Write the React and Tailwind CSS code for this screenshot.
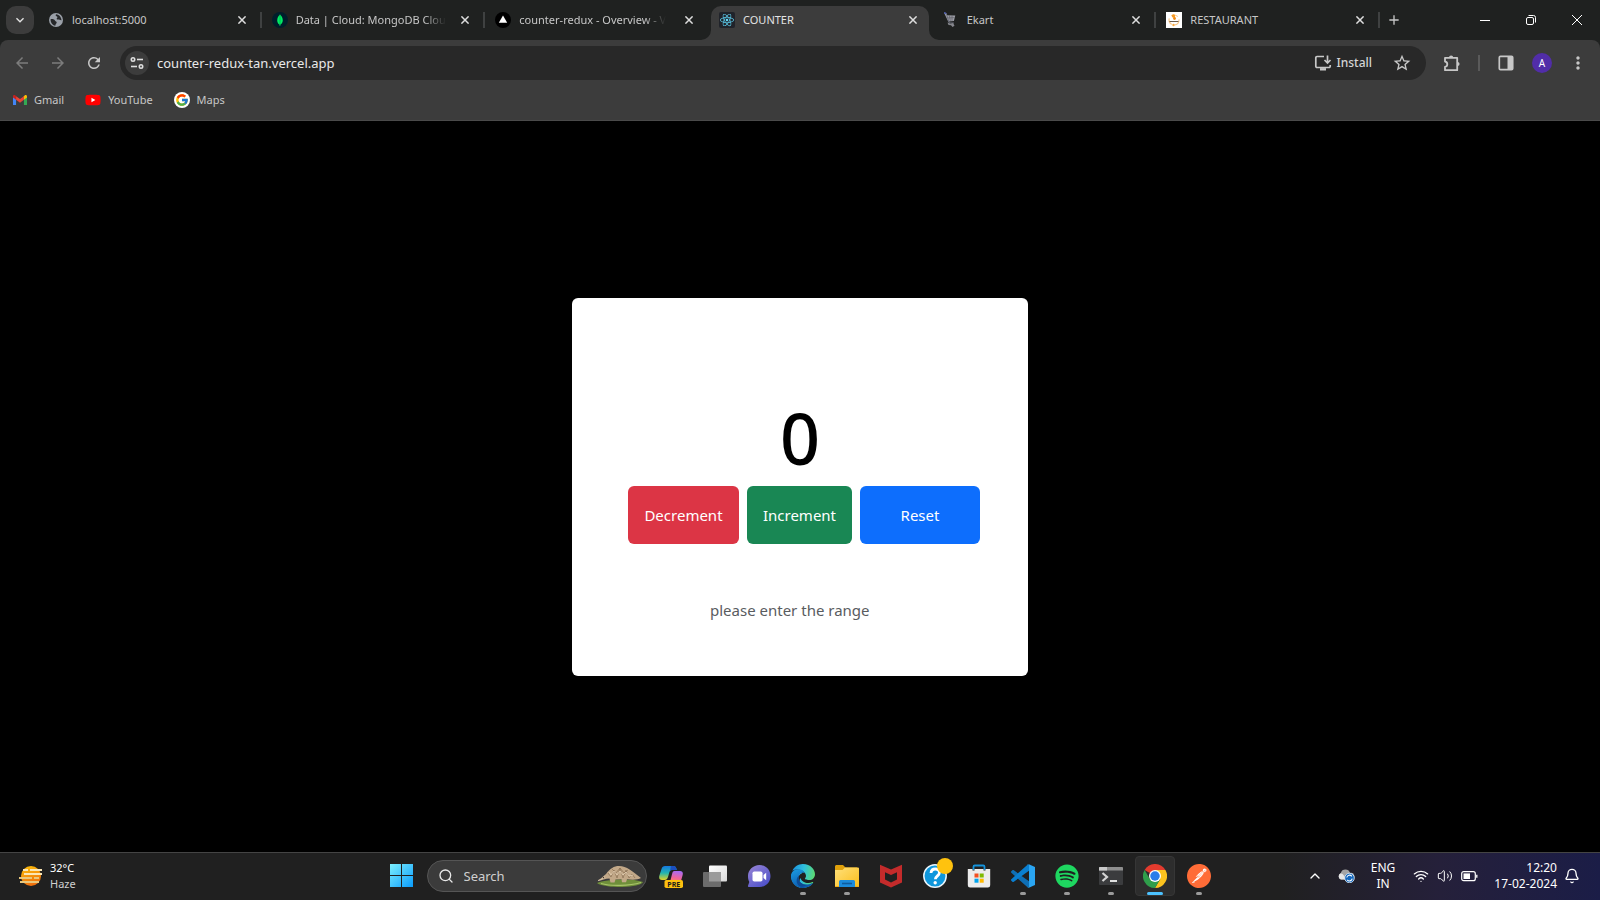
import React, { useState } from "react";
import {
  MdArrowBack,
  MdArrowForward,
  MdRefresh,
  MdAdd,
  MdStarBorder,
  MdMoreVert,
  MdKeyboardArrowDown,
} from "react-icons/md";
import { FaReact, FaYoutube, FaSpotify, FaEdge } from "react-icons/fa6";
import { SiPostman } from "react-icons/si";
import { FcGoogle } from "react-icons/fc";
import { Wifi, Volume2, Bell, ChevronUp, Search } from "lucide-react";

/* ---------- favicons ---------- */

const GlobeIcon = () => (
  <svg viewBox="0 0 16 16" className="size-4">
    <circle cx="8" cy="8" r="7" fill="#9aa0a8" />
    <path d="M2.600 7.200c2.200-.4 3.800.2 4.300 1.300.4 1 1.800.8 1.800 2 0 1-1.200 1.200-1.400 3.200-2.900-.6-4.900-3.200-4.700-6.500z" fill="#26282a" />
    <path d="M8.200 2.200c-.8.800-.6 1.600.3 2 .9.300 1.300 1 .5 1.700-.7.700-.3 1.600.9 1.700 1.500.1 2.400.8 3.600.6-.1-2.900-2.200-5.500-5.300-6z" fill="#26282a" />
  </svg>
);

const MongoIcon = () => (
  <svg viewBox="0 0 16 16" className="size-4">
    <circle cx="8" cy="8" r="8" fill="#001e2b" />
    <path d="M8 2.200c.4 1 2.800 2.600 2.800 6 0 2.300-1.200 3.600-2.400 4.400L8.200 14h-.5l-.2-1.400C6.200 11.700 5.200 10.400 5.200 8.200c0-3.400 2.400-5 2.800-6z" fill="#00ed64" />
    <path d="M8 3v9" stroke="#00a84a" strokeWidth=".7" />
  </svg>
);

const VercelIcon = () => (
  <svg viewBox="0 0 16 16" className="size-4">
    <circle cx="8" cy="8" r="8" fill="#000" />
    <path d="M8 3.500l4.200 7.300H3.800z" fill="#fff" />
  </svg>
);

const ReactIcon = () => (
  <span className="flex size-4 items-center justify-center rounded-xs bg-[#20232a]">
    <FaReact className="size-3.5 text-[#61dafb]" />
  </span>
);

const CartIcon = () => (
  <svg viewBox="0 0 16 16" className="size-4">
    <path d="M1 .8l2.200.5.8 2 8.300.2-1.400 5.400-5.700.6z" fill="#9a9ba3" />
    <path d="M1 .8l2.200.5L6.300 11h4.500" fill="none" stroke="#6f7280" strokeWidth="1" />
    <path d="M6.500 3.500l.8 5.500M9 3.500v5.400M4.500 6l7-.4" stroke="#55575f" strokeWidth=".6" />
    <path d="M4.500 10.500l3 1.300 2.600-.8 1.400 2.800-2 1.200-1.500-1.700-2.500-.4z" fill="#85868c" />
    <path d="M1 .8l2.200.5" stroke="#4157c9" strokeWidth="1" />
  </svg>
);

const RestaurantIcon = () => (
  <svg viewBox="0 0 16 16" className="size-4">
    <rect width="16" height="16" fill="#fff" />
    <circle cx="8" cy="8" r="5" fill="none" stroke="#fbc98a" strokeWidth="1.200" strokeDasharray="7 3" />
    <circle cx="7.500" cy="4" r="1.700" fill="#f59a23" />
    <circle cx="8.500" cy="6.500" r="1.400" fill="#f28a12" />
    <path d="M3.500 9.500h9" stroke="#6b5a48" strokeWidth="1" />
    <circle cx="7.500" cy="13" r="1.200" fill="#f8a73c" />
  </svg>
);

const GmailIcon = () => (
  <svg viewBox="0 0 16 12" className="w-3.5">
    <path d="M0 1.500V11a1 1 0 001 1h2.500V5.200L1.700 2z" fill="#4285f4" />
    <path d="M16 1.500V11a1 1 0 01-1 1h-2.500V5.200L14.300 2z" fill="#34a853" />
    <path d="M12.500 1.500v3.900L16 2.900V1.500c0-1.400-1.500-2-2.500-1.200z" fill="#fbbc04" />
    <path d="M3.500 5.400V1.300L8 4.700l4.500-3.400v4.100L8 8.800z" fill="#ea4335" />
    <path d="M0 1.500v1.400l3.500 2.500V1.300L2.500.4C1.500-.4 0 .2 0 1.500z" fill="#c5221f" />
  </svg>
);

/* ---------- browser toolbar icons ---------- */

const CloseIcon = () => (
  <svg viewBox="0 0 8 8" className="size-2" stroke="currentColor" strokeWidth="1.500">
    <path d="M.4.4l7.200 7.200M7.600.4L.4 7.600" />
  </svg>
);

const TuneIcon = () => (
  <svg viewBox="0 0 16 16" className="size-4" fill="none" stroke="#dedede" strokeWidth="1.600">
    <circle cx="4" cy="4.500" r="1.700" />
    <path d="M8 4.500h6" />
    <circle cx="12" cy="11.500" r="1.700" />
    <path d="M2 11.500h6" />
  </svg>
);

const InstallIcon = () => (
  <svg viewBox="0 0 18 18" className="size-[18px]" fill="none" stroke="#c7c7c7" strokeWidth="1.700">
    <path d="M10 2.500H3a1.200 1.200 0 00-1.200 1.200v8.600A1.200 1.200 0 003 13.500h12a1.200 1.200 0 001.200-1.200V11" />
    <path d="M13.500 1.500v7M10.500 6l3 3 3-3" />
    <path d="M6 15.300h6" strokeWidth="2.400" />
  </svg>
);

const PuzzleIcon = () => (
  <svg viewBox="0 0 18 18" className="size-[18px]">
    <path
      d="M2 3.800h12.200v12.400H2v-3.400c1.500-.2 2.300-1.200 2.300-2.600S3.500 7.800 2 7.500z"
      fill="none"
      stroke="#c7c7c7"
      strokeWidth="1.800"
      strokeLinejoin="round"
    />
    <path d="M6 3.500a2.100 2.100 0 014.200 0zM14.500 7.900a2.100 2.100 0 010 4.200z" fill="#c7c7c7" />
  </svg>
);

const PanelIcon = () => (
  <svg viewBox="0 0 16 16" className="size-4">
    <rect x="1.300" y="1.300" width="13.400" height="13.400" rx="1.200" fill="none" stroke="#c7c7c7" strokeWidth="1.700" />
    <path d="M9.500 1.500h5v13h-5z" fill="#c7c7c7" />
  </svg>
);

/* ---------- taskbar icons ---------- */

const HazeIcon = () => (
  <svg viewBox="0 0 24 22" className="w-6">
    <defs>
      <linearGradient id="haze" x1="0" y1="0" x2="0.300" y2="1">
        <stop offset="0" stopColor="#fdc20a" />
        <stop offset="1" stopColor="#f0700c" />
      </linearGradient>
    </defs>
    <circle cx="12" cy="11" r="10" fill="url(#haze)" />
    <path d="M4 5h5M11 5h12M5 9h18" stroke="#fbe6b5" strokeWidth="1.800" />
    <path d="M0 13h13M15 13h5M1 17h19" stroke="#e9c77d" strokeWidth="1.800" />
  </svg>
);

const StartIcon = () => (
  <svg viewBox="0 0 23 23" className="size-[23px]">
    <defs>
      <linearGradient id="win" gradientUnits="userSpaceOnUse" x1="0" y1="0" x2="23" y2="23">
        <stop offset="0" stopColor="#7df0ff" />
        <stop offset="1" stopColor="#0a9bfb" />
      </linearGradient>
    </defs>
    <path d="M0 0h11v11H0zM12 0h11v11H12zM0 12h11v11H0zM12 12h11v11H12z" fill="url(#win)" />
  </svg>
);

const Pangolin = () => (
  <svg viewBox="0 0 46 22" className="w-[46px]">
    <path d="M0 18c8-4 36-5 46-1-2 6-38 7-46 1z" fill="#6f8f3a" />
    <path d="M4 18.500c10 3 28 2.500 40-1" stroke="#a8c46a" strokeWidth="1.200" fill="none" />
    <path d="M1 15.500c3-1.600 5-4.500 8-6.500C13 3.500 17 1 22 1c8 0 13 5 22 12-3 2-9 1.800-14 1.300l-1 3h-4l-.5-3-6 .3-1 3h-4l-1-4.200C8 13.500 5 15.800 1 15.500z" fill="#c2a888" />
    <path d="M11 8l3 4 3-7 3 8 3-10 3 10 3-8 3 8 3-4 3 4M15 4l4 4 4-5 4 5 4-3" stroke="#8a7053" strokeWidth=".7" fill="none" />
    <path d="M12 7l2 3 3-4 3 4 3-4 3 4 3-3 3 4 4-1" stroke="#e6d2b6" strokeWidth=".8" fill="none" />
    <path d="M1 15.500c3-.5 5-2 7-4" stroke="#d8c4aa" strokeWidth="1" fill="none" />
    <circle cx="6.500" cy="12.600" r=".6" fill="#2c2219" />
  </svg>
);

const CopilotIcon = () => (
  <svg viewBox="0 0 24 24" className="size-6">
    <defs>
      <linearGradient id="cpA" x1="0" y1="0" x2="0" y2="1">
        <stop offset="0" stopColor="#1578e0" />
        <stop offset=".5" stopColor="#22b5b0" />
        <stop offset="1" stopColor="#e3d324" />
      </linearGradient>
      <linearGradient id="cpB" x1="0.500" y1="0" x2="0.300" y2="1">
        <stop offset="0" stopColor="#a76bf5" />
        <stop offset=".6" stopColor="#f0649a" />
        <stop offset="1" stopColor="#fb8a5b" />
      </linearGradient>
    </defs>
    <path d="M6 2h8.500c2 0 2.700 1.400 3.300 4H13c-1.500 0-2.300 1-2.700 2.500L9 13c-.6 2-1.500 3-3.300 3H3c-2.600 0-3.300-2-2.600-4.500L2.600 4.700C3.200 2.800 4.200 2 6 2z" fill="url(#cpA)" />
    <path d="M12 2h2.500c2 0 2.700 1.400 3.300 4H13c-.8 0-1.500.3-2 1z" fill="#1b4fc0" />
    <path d="M15.500 7H21c2.500 0 3.300 1.700 2.600 4.200l-2 7H11l2-8c.5-2 1-3.200 2.500-3.200z" fill="url(#cpB)" />
    <rect x="5.500" y="16" width="18.500" height="8" rx="1.800" fill="#fdc00f" />
    <text x="14.800" y="22.600" textAnchor="middle" fontSize="7" fontWeight="700" fill="#1b1b1b" fontFamily="Noto Sans, sans-serif">PRE</text>
  </svg>
);

const TaskViewIcon = () => (
  <svg viewBox="0 0 24 24" className="size-6">
    <defs>
      <linearGradient id="tv" x1="0" y1="0" x2="1" y2="1">
        <stop offset="0" stopColor="#fff" />
        <stop offset="1" stopColor="#d9d9d9" />
      </linearGradient>
    </defs>
    <rect x="6" y="1.500" width="18" height="16" rx="1" fill="url(#tv)" />
    <rect x="0" y="8" width="18" height="15" rx="1" fill="#6c6c6c" />
    <path d="M6 8h12v9.500H6z" fill="#9b9b9b" />
  </svg>
);

const ChatIcon = () => (
  <svg viewBox="0 0 24 24" className="size-6">
    <defs>
      <linearGradient id="chat" x1="0" y1="0" x2="0.800" y2="1">
        <stop offset="0" stopColor="#9a86d6" />
        <stop offset="1" stopColor="#4b4fc9" />
      </linearGradient>
    </defs>
    <path d="M12.500 1C19 1 23.500 6 23.500 12S19 23 12.500 23H1.800c-.9 0-1-.8-.7-1.500L2.300 18C1.200 16 1 14 1 12 1 6 6 1 12.500 1z" fill="url(#chat)" />
    <rect x="5.500" y="7.500" width="10" height="10" rx="1.800" fill="#fff" />
    <path d="M16.500 11l2.700-2.300v7.600L16.500 14z" fill="#fff" />
  </svg>
);

const EdgeIcon = () => (
  <svg viewBox="0 0 24 24" className="size-6">
    <defs>
      <linearGradient id="edgeTop" x1="0" y1="0.300" x2="1" y2="0.500">
        <stop offset="0" stopColor="#1a8fe0" />
        <stop offset=".5" stopColor="#2fc0dd" />
        <stop offset="1" stopColor="#5fdc6b" />
      </linearGradient>
      <linearGradient id="edgeLow" x1="0" y1="0" x2="0.500" y2="1">
        <stop offset="0" stopColor="#1b9de2" />
        <stop offset="1" stopColor="#0b58ae" />
      </linearGradient>
    </defs>
    <FaEdge size={24} fill="url(#edgeTop)" />
    <path d="M.3 10C1.500 6.500 4.500 5.200 7.500 5.200c3 0 5.500 1.500 6.200 4-3-1.200-6.200 1-6.200 4.800 0 4.200 4.500 7.200 9 6.600 2-.3 3.600-.9 4.700-1.600.5-.3.900.2.600.6C19.500 22.500 16 24 12 24 5 24 0 18.800 0 12c0-.7.1-1.400.3-2z" fill="url(#edgeLow)" />
    <path d="M7.500 14c0 4.200 4.500 7.200 9 6.600-2 1.600-5.800 2.900-8.200 1.400C5 20 4.500 14 8.500 11c-.7.900-1 1.900-1 3z" fill="#0d4a94" />
  </svg>
);

const ExplorerIcon = () => (
  <svg viewBox="0 0 24 24" className="size-6">
    <defs>
      <linearGradient id="fold" x1="0" y1="0" x2="1" y2="1">
        <stop offset="0" stopColor="#ffe07a" />
        <stop offset="1" stopColor="#fbbd1b" />
      </linearGradient>
    </defs>
    <path d="M0 2.500C0 1.700.7 1 1.500 1H8l2.500 2.500H22V9H0z" fill="#e0a10b" />
    <path d="M0 6h7.500L10 3.500h13a1 1 0 011 1V22a1 1 0 01-1 1H1a1 1 0 01-1-1z" fill="url(#fold)" />
    <path d="M4 23v-5.500A1.500 1.500 0 015.500 16h13a1.500 1.500 0 011.500 1.500V23z" fill="#1c8bdc" />
    <path d="M7 19.500h10" stroke="#0f5c9e" strokeWidth="1.600" />
    <path d="M0 22h4v1H0zM20 22h4v1h-4z" fill="#f3ab12" />
  </svg>
);

const McAfeeIcon = () => (
  <svg viewBox="0 0 24 24" className="size-6">
    <path d="M1 .8L12 5.500 23 .8v17.600l-11 5.200-11-5.200z" fill="#c42b2b" />
    <path d="M6 8.200l6 2.800 6-2.800v7.300l-6 3-6-3z" fill="#202020" />
  </svg>
);

const HelpIcon = () => (
  <svg viewBox="0 0 24 24" className="size-6">
    <circle cx="12" cy="12" r="11.200" fill="#0f97dc" stroke="#e9f4fa" strokeWidth="1.500" />
    <path d="M8 9c.2-2.700 2-4 4.300-4s4.100 1.500 4.100 3.700c0 3-4 3.300-4 6.500" fill="none" stroke="#fff" strokeWidth="2.800" />
    <circle cx="12.200" cy="18.800" r="1.700" fill="#fff" />
  </svg>
);

const StoreIcon = () => (
  <svg viewBox="0 0 24 24" className="size-6">
    <path d="M6.500 6V2.800c0-.7.500-1.300 1.300-1.300h8.400c.8 0 1.300.6 1.300 1.300V6" fill="none" stroke="#1593dc" strokeWidth="1.800" />
    <path d="M.8 5h4.700v1.500h2V5h9v1.500h2V5h4.700v16.200a2.300 2.300 0 01-2.300 2.300H3.100a2.300 2.300 0 01-2.300-2.300z" fill="#ececec" />
    <path d="M7.500 9.500h4v4h-4z" fill="#f25022" />
    <path d="M12.700 9.500h4v4h-4z" fill="#7fba00" />
    <path d="M7.500 14.700h4v4h-4z" fill="#00a4ef" />
    <path d="M12.700 14.700h4v4h-4z" fill="#ffb900" />
  </svg>
);

const CodeIcon = () => (
  <svg viewBox="0 0 24 24" className="size-6">
    <path d="M18 17.300L2.500 6.100c-.4-.2-.8-.2-1.100.1L.3 7.300c-.4.400-.4 1 0 1.400l16.500 14.900L18 23z" fill="#0f6fb5" />
    <path d="M18 6.700L2.500 17.900c-.4.200-.8.200-1.100-.1L.3 16.700c-.4-.4-.4-1 0-1.400L16.800.4 18 1z" fill="#0a7fd0" />
    <path d="M17.300.1L24 3v18l-6.700 2.900c-.6.100-.9 0-1.300-.4 1 .6 2 .1 2-.9V1.400c0-1-1-1.500-2-.9.4-.4.700-.5 1.300-.4z" fill="#2aa5f2" />
  </svg>
);

const TerminalIcon = () => (
  <svg viewBox="0 0 24 24" className="size-6">
    <rect x="0" y="3" width="24" height="18" rx="1" fill="#3b3c3e" />
    <path d="M0 6.500V4a1 1 0 011-1h22a1 1 0 011 1v2.500z" fill="#8e8e8e" />
    <path d="M0 6.500V4a1 1 0 011-1h7v3.500z" fill="#c9c9c9" />
    <path d="M3.500 9l4.500 4-4.500 4" fill="none" stroke="#d4d4d4" strokeWidth="2.200" />
    <path d="M11 17h7" stroke="#f2f2f2" strokeWidth="1.800" />
  </svg>
);

const ChromeIcon = () => (
  <svg viewBox="0 0 48 48" className="size-6">
    <path d="M24 24L3.200 12A24 24 0 0144.800 12z" fill="#e33b2e" />
    <path d="M24 12h20.800A24 24 0 0124 48l10.400-18z" fill="#fcc31e" />
    <path d="M13.600 30L3.200 12A24 24 0 0024 48l10.400-18z" fill="#2f9e4b" />
    <circle cx="24" cy="24" r="12" fill="#fff" />
    <circle cx="24" cy="24" r="9.500" fill="#2b7de9" />
  </svg>
);

const CloudIcon = () => (
  <svg viewBox="0 0 18 14" className="w-[18px]">
    <path d="M4 10.500A3.500 3.500 0 013.800 4 4.800 4.800 0 0113 4a3.300 3.300 0 012 6.500z" fill="#a4a4a4" />
    <path d="M3.800 10.500a3.300 3.300 0 01-.4-6c2 0 4 1 5 6z" fill="#e6e6e6" />
    <circle cx="12.500" cy="9" r="4.800" fill="#1266bd" stroke="#e8f1fa" strokeWidth=".8" />
    <path d="M9.800 8.500a2.800 2.800 0 015-1.200M15.200 9.600a2.800 2.800 0 01-5 1.200" fill="none" stroke="#fff" strokeWidth="1.100" />
  </svg>
);

const BatteryIcon = () => (
  <svg viewBox="0 0 17 12" className="w-[17px]">
    <rect x=".7" y="1.700" width="13.600" height="9" rx="2" fill="none" stroke="#fff" strokeWidth="1.200" />
    <rect x="2.500" y="3.400" width="6.500" height="5.600" fill="#fff" />
    <path d="M15.800 4.700v3" stroke="#fff" strokeWidth="1.300" />
  </svg>
);

/* ---------- data ---------- */

const TABS = [
  { title: "localhost:5000", icon: <GlobeIcon />, divider: true },
  { title: "Data | Cloud: MongoDB Clou", icon: <MongoIcon />, divider: true, fade: true },
  { title: "counter-redux - Overview - V", icon: <VercelIcon />, fade: true },
  { title: "COUNTER", icon: <ReactIcon />, active: true },
  { title: "Ekart", icon: <CartIcon />, divider: true },
  { title: "RESTAURANT", icon: <RestaurantIcon />, divider: true },
];

const BOOKMARKS = [
  { label: "Gmail", icon: <GmailIcon /> },
  {
    label: "YouTube",
    icon: (
      <span className="flex bg-[linear-gradient(#fff,#fff)] bg-[length:6px_6px] bg-center bg-no-repeat">
        <FaYoutube className="size-4 text-[#ff0000]" />
      </span>
    ),
  },
  {
    label: "Maps",
    icon: (
      <span className="flex size-4 items-center justify-center rounded-full bg-white">
        <FcGoogle className="size-3.5" />
      </span>
    ),
  },
];

const APPS = [
  { name: "Copilot", icon: <CopilotIcon /> },
  { name: "Task View", icon: <TaskViewIcon /> },
  { name: "Chat", icon: <ChatIcon /> },
  { name: "Edge", icon: <EdgeIcon />, running: true },
  { name: "File Explorer", icon: <ExplorerIcon />, running: true },
  { name: "McAfee", icon: <McAfeeIcon /> },
  { name: "Get Help", icon: <HelpIcon />, badge: true },
  { name: "Store", icon: <StoreIcon /> },
  { name: "Visual Studio Code", icon: <CodeIcon />, running: true },
  { name: "Spotify", icon: <FaSpotify className="size-6 text-[#1ed760]" />, running: true },
  { name: "Terminal", icon: <TerminalIcon />, running: true },
  { name: "Chrome", icon: <ChromeIcon />, active: true },
  {
    name: "Postman",
    icon: (
      <span className="flex size-6 rounded-full bg-[radial-gradient(#fff_60%,transparent_62%)]">
        <SiPostman className="size-6 text-[#ff6c37]" />
      </span>
    ),
    running: true,
  },
];

/* ---------- sections ---------- */

function Tab({ title, icon, active, divider, fade }) {
  return (
    <div className="flex min-w-0 flex-1 items-center">
      <div
        className={
          active
            ? "relative flex h-full min-w-0 flex-1 items-center gap-2 rounded-t-[10px] bg-[#3c3c3c] px-2 pb-1.5"
            : "flex h-full min-w-0 flex-1 items-center gap-2 px-2 pb-1.5"
        }
      >
        {active && (
          <>
            <svg viewBox="0 0 10 10" className="absolute right-full bottom-0 size-2.5">
              <path d="M10 0v10H0A10 10 0 0010 0z" fill="#3c3c3c" />
            </svg>
            <svg viewBox="0 0 10 10" className="absolute bottom-0 left-full size-2.5">
              <path d="M0 0v10h10A10 10 0 010 0z" fill="#3c3c3c" />
            </svg>
          </>
        )}
        <span className="flex size-4 shrink-0 items-center justify-center">{icon}</span>
        <div className="flex min-w-0 flex-1 overflow-hidden">
          <button
            role="tab"
            aria-selected={Boolean(active)}
            className={
              active
                ? "whitespace-nowrap text-[#e3e3e3]"
                : fade
                  ? "whitespace-nowrap text-[#c7c7c7] [mask-image:linear-gradient(to_right,#000_calc(100%-22px),transparent)]"
                  : "whitespace-nowrap text-[#c7c7c7]"
            }
          >
            {title}
          </button>
        </div>
        <button aria-label={`Close ${title}`} className="flex size-4 shrink-0 items-center justify-center text-[#dedede]">
          <CloseIcon />
        </button>
      </div>
      <span className={divider ? "mx-0.5 mb-1.5 h-4 w-0.5 bg-[#3f4141]" : "mx-0.5 w-0.5"} />
    </div>
  );
}

function BrowserChrome() {
  const tool = "flex h-9 w-9 items-center justify-center";
  return (
    <header className="bg-[#1f2120] text-[11px] leading-4">
      <div className="flex h-10 items-stretch pl-1.5">
        <button aria-label="Search tabs" className="mt-1.5 flex size-7 shrink-0 items-center justify-center rounded-[10px] bg-[#3c3c3c] text-[#e3e3e3]">
          <MdKeyboardArrowDown className="size-4" />
        </button>
        <div role="tablist" className="ml-1.5 flex max-w-[1342px] flex-1 pt-1.5">
          {TABS.map((tab) => (
            <Tab key={tab.title} {...tab} />
          ))}
        </div>
        <button aria-label="New tab" className="flex w-6 items-center justify-center text-[#c7c7c7]">
          <MdAdd className="size-4" />
        </button>
        <div className="ml-auto flex text-white">
          <button aria-label="Minimize" className="flex w-[46px] items-center justify-center">
            <svg viewBox="0 0 10 10" className="size-2.5" stroke="currentColor"><path d="M0 5.500h10" /></svg>
          </button>
          <button aria-label="Restore" className="flex w-[46px] items-center justify-center">
            <svg viewBox="0 0 10 10" className="size-2.5" stroke="currentColor" fill="none">
              <rect x=".5" y="2.500" width="7" height="7" rx="1.500" />
              <path d="M2.500.5H7.500a2 2 0 012 2V7.500" />
            </svg>
          </button>
          <button aria-label="Close window" className="flex w-[46px] items-center justify-center">
            <svg viewBox="0 0 10 10" className="size-2.5" stroke="currentColor"><path d="M0 0l10 10M10 0L0 10" /></svg>
          </button>
        </div>
      </div>

      <div className="rounded-t-lg border-b border-[#4a4a4a] bg-[#3c3c3c] pb-1.5">
        <div className="flex h-[46px] items-center px-1 text-[#c7c7c7]">
          <button aria-label="Back" className={`${tool} text-[#7c7c7c]`}><MdArrowBack className="size-[18px]" /></button>
          <button aria-label="Forward" className={`${tool} text-[#7c7c7c]`}><MdArrowForward className="size-[18px]" /></button>
          <button aria-label="Reload" className={tool}><MdRefresh className="size-[18px]" /></button>
          <div className="mx-2 flex h-[34px] min-w-0 flex-1 items-center rounded-full bg-[#282828] pr-3 pl-[5px]">
            <button aria-label="Site information" className="flex size-6 shrink-0 items-center justify-center rounded-full bg-[#3c3c3c]">
              <TuneIcon />
            </button>
            <input
              aria-label="Address"
              defaultValue="counter-redux-tan.vercel.app"
              className="ml-2 min-w-0 flex-1 bg-transparent text-[13px] text-[#e8e8e8] outline-none"
            />
            <button className="flex items-center gap-1 text-xs font-medium text-[#d4d4d4]">
              <InstallIcon />
              Install
            </button>
            <button aria-label="Bookmark this page" className="ml-[18px] flex size-6 items-center justify-center">
              <MdStarBorder className="size-5" />
            </button>
          </div>
          <button aria-label="Extensions" className={tool}><PuzzleIcon /></button>
          <span className="mx-2 h-4 w-0.5 bg-[#5a5a5a]" />
          <button aria-label="Side panel" className={tool}><PanelIcon /></button>
          <button aria-label="Profile" className={tool}>
            <span className="flex size-5 items-center justify-center rounded-full bg-[#512da8] text-[10px] text-white">A</span>
          </button>
          <button aria-label="Menu" className={tool}><MdMoreVert className="size-5" /></button>
        </div>
        <nav className="flex h-7 items-center gap-[21px] pl-[13px] text-[#c7c7c7]">
          {BOOKMARKS.map((b) => (
            <a key={b.label} href="#" className="flex items-center gap-[7px]">
              {b.icon}
              {b.label}
            </a>
          ))}
        </nav>
      </div>
    </header>
  );
}

function Counter() {
  const [count, setCount] = useState(0);
  const [range, setRange] = useState("");
  const step = Number(range) || 1;
  const button = "h-[58px] rounded-md text-[15px] leading-6 text-white";
  return (
    <main className="flex flex-1 items-center justify-center bg-black">
      <section className="w-[456px] rounded-md bg-white pt-24 pb-12">
        <output className="mb-1 block text-center text-[70px] leading-[88px] font-medium text-black">{count}</output>
        <div className="flex gap-2 pr-12 pl-14">
          <button onClick={() => setCount(count - step)} className={`${button} w-[111px] bg-[#dc3545]`}>Decrement</button>
          <button onClick={() => setCount(count + step)} className={`${button} w-[105px] bg-[#198754]`}>Increment</button>
          <button onClick={() => setCount(0)} className={`${button} flex-1 bg-[#0d6efd]`}>Reset</button>
        </div>
        <input
          aria-label="Range"
          value={range}
          onChange={(e) => setRange(e.target.value)}
          placeholder="please enter the range"
          className="mx-auto mt-12 block h-9 w-[204px] px-3 text-[15px] text-[#212529] outline-none placeholder:text-[#595c5f]"
        />
      </section>
    </main>
  );
}

function Taskbar() {
  return (
    <footer className="grid h-12 grid-cols-[1fr_auto_1fr] items-center border-t border-[#444] bg-[linear-gradient(to_right,#202020_80%,#25203a_90%,#1b1d47)] pb-0.5 text-[11px] leading-4 text-white">
      <button className="ml-[19px] flex items-center gap-[7px] justify-self-start text-left">
        <HazeIcon />
        <span>
          <span className="block">32°C</span>
          <span className="block text-[#cfcfcf]">Haze</span>
        </span>
      </button>

      <div className="flex items-center">
        <button aria-label="Start" className="flex h-10 w-11 items-center justify-center"><StartIcon /></button>
        <label className="mr-0.5 ml-[3px] flex h-8 w-[220px] items-center rounded-full border border-[#555] bg-[#3b3b3b] pr-[3px] pl-2.5">
          <Search className="size-4 shrink-0 text-[#e8e8e8]" />
          <input
            type="text"
            aria-label="Search"
            placeholder="Search"
            className="ml-2.5 min-w-0 flex-1 bg-transparent text-[13px] outline-none placeholder:text-[#cfcfcf]"
          />
          <Pangolin />
        </label>
        {APPS.map((app) => (
          <div key={app.name} className="px-0.5">
            <button
              aria-label={app.name}
              className={
                app.active
                  ? "relative flex size-10 items-center justify-center rounded-sm border border-[#363636] bg-[#2d2d2d]"
                  : "relative flex size-10 items-center justify-center"
              }
            >
              {app.icon}
              {app.badge && <span className="absolute top-0.5 right-0.5 size-4 rounded-full bg-[#ffc20e]" />}
              {app.running && <span className="absolute bottom-px h-[3px] w-1.5 rounded-full bg-[#9a9a9a]" />}
              {app.active && <span className="absolute bottom-0 h-[3px] w-4 rounded-full bg-[#4cc2ff]" />}
            </button>
          </div>
        ))}
      </div>

      <div className="flex items-center justify-self-end pr-5 text-xs leading-4">
        <button aria-label="Show hidden icons" className="mr-3.5"><ChevronUp className="size-4" /></button>
        <button aria-label="OneDrive" className="mr-4"><CloudIcon /></button>
        <button className="mr-[18px] text-center">
          <span className="block">ENG</span>
          <span className="block">IN</span>
        </button>
        <button aria-label="Network, volume and battery" className="mr-4 flex items-center gap-2">
          <Wifi className="size-4" />
          <Volume2 className="size-4" strokeWidth={1.5} />
          <BatteryIcon />
        </button>
        <button className="mr-[7px] text-right">
          <span className="block">12:20</span>
          <span className="block">17-02-2024</span>
        </button>
        <button aria-label="Notifications"><Bell className="size-4" /></button>
      </div>
    </footer>
  );
}

export default function App() {
  return (
    <div className="flex min-h-screen flex-col font-['Noto_Sans','Open_Sans',sans-serif]">
      <BrowserChrome />
      <Counter />
      <Taskbar />
    </div>
  );
}
